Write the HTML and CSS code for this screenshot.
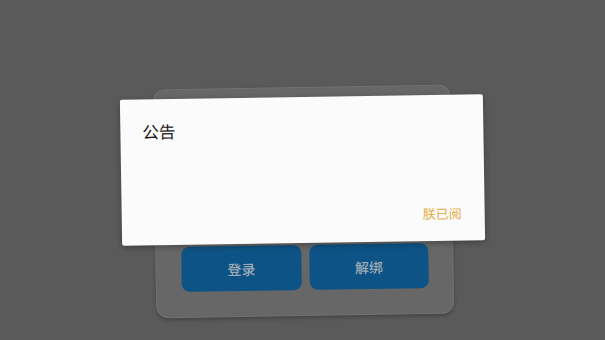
FILE: index.html
```html
<!DOCTYPE html>
<html lang="zh">
<head>
<meta charset="utf-8">
<link rel="stylesheet" href="styles.css">
</head>
<body>
<div class="scene">
  <div class="card">
    <div class="actions">
      <button class="btn">登录</button>
      <button class="btn">解绑</button>
    </div>
  </div>
  <div class="dialog">
    <div class="title">公告</div>
    <div class="footer"><span class="ok">朕已阅</span></div>
  </div>
</div>
</body>
</html>
```
FILE: styles.css
```css
html, body {
  margin: 0;
  padding: 0;
  width: 605px;
  height: 340px;
  overflow: hidden;
  background: #5a5a5a;
  font-family: "Noto Sans CJK SC", "Noto Sans", sans-serif;
}
.scene {
  position: relative;
  width: 605px;
  height: 340px;
  transform: rotate(-0.9deg);
  transform-origin: 303px 170px;
}
.card {
  position: absolute;
  left: 154px;
  top: 87px;
  width: 298px;
  height: 229px;
  box-sizing: border-box;
  background: #676767;
  border: 1px solid #717171;
  border-radius: 12px;
  box-shadow: 0 2px 4px rgba(0,0,0,0.25);
  display: flex;
  flex-direction: column;
  justify-content: flex-end;
  padding: 0 24px 25px 25px;
}
.actions {
  display: flex;
  gap: 8px;
}
.btn {
  width: 120px;
  height: 45px;
  border: none;
  border-radius: 8px;
  background: #0d5385;
  color: #9eaab6;
  font-family: inherit;
  font-size: 14px;
  font-weight: 500;
  padding: 0;
}
.dialog {
  position: absolute;
  left: 121px;
  top: 97px;
  width: 363px;
  height: 146px;
  box-sizing: border-box;
  background: #fbfbfb;
  border-radius: 2px;
  box-shadow: 0 2px 6px rgba(0,0,0,0.3);
  display: flex;
  flex-direction: column;
  justify-content: space-between;
  padding: 20px 23px 18px 22px;
}
.title {
  font-size: 16.5px;
  font-weight: 400;
  color: #1a1a1a;
  line-height: 24px;
}
.footer {
  display: flex;
  justify-content: flex-end;
}
.ok {
  font-size: 13px;
  color: #e2ad45;
  line-height: 18px;
}
```
